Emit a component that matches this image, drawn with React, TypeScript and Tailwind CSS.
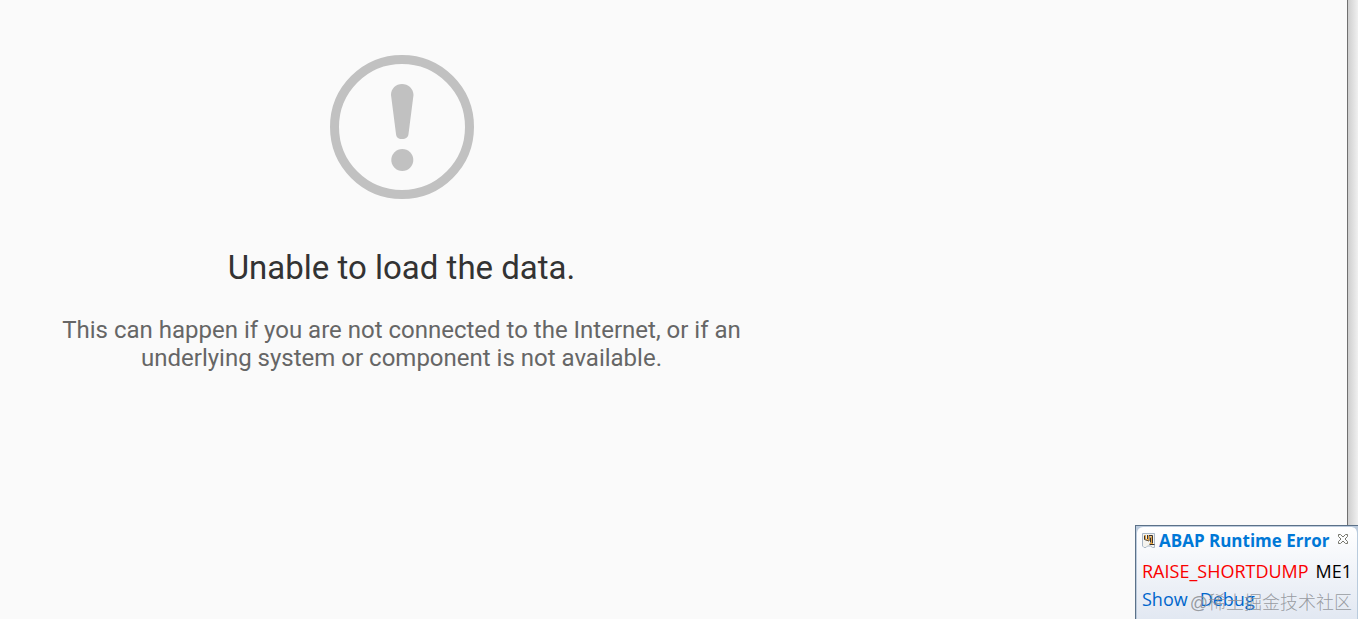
function WarningIcon() {
  return (
    <svg viewBox="0 0 144 144" className="size-36" fill="#c1c1c1" aria-hidden="true">
      <circle cx="72" cy="72" r="67.5" fill="none" stroke="#c1c1c1" strokeWidth="9" />
      <path d="M61 40C61 33.500 66 29 72 29s11.500 4.500 11.500 11L78.500 79c-.4 3.500-2.500 5-6.500 5s-5.600-1.500-6-5z" />
      <circle cx="72.300" cy="105" r="11" />
    </svg>
  );
}

function DumpIcon() {
  return (
    <svg viewBox="0 0 14 16" className="h-4 w-3.5 shrink-0" aria-hidden="true">
      <path d="M.5.5h12v14h-2l-2-1.500h-3L4 14.500H2L.5 13z" fill="#f4f3ee" stroke="#a9b7c6" />
      <path d="M2.500 2.500v4l4.500 1.500v-5.500h3.500v8.500M7.500 11.500h5" fill="none" stroke="#3a3431" strokeWidth="1" />
      <path d="M3.500 2v4l2.500 1M6.500 2.500v5M8.500 3.500h1v7M7.500 10.500h3.500" fill="none" stroke="#e5a23c" strokeWidth="1" />
      <path d="M5.500 2v4M8.500 4.500v5" fill="none" stroke="#3a3431" strokeWidth="1" />
    </svg>
  );
}

function CloseIcon() {
  return (
    <svg viewBox="0 0 12 12" className="size-3" fill="none" stroke="#77776d" aria-hidden="true">
      <path d="M1.500 1.500h2l2.500 2.500 2.500-2.500h2v2L8 6l2.500 2.500v2h-2L6 8l-2.500 2.500h-2v-2L4 6 1.500 3.500z" />
    </svg>
  );
}

function ErrorPopup() {
  return (
    <aside
      aria-label="ABAP Runtime Error"
      className="fixed right-0 bottom-0 w-[223px] border-t border-l border-[#5b7188] bg-[#bccbdd] pt-px pl-px font-['Open_Sans','Noto_Sans',sans-serif] text-lg"
    >
      <div className="rounded-tl-md rounded-tr-md border-r border-[#b9cbdd] bg-linear-to-b from-white to-[#e2e8f2] pb-2 pl-[5px]">
        <header className="flex h-7 items-center">
          <DumpIcon />
          <h2 className="ml-[3px] text-[17px] font-bold whitespace-nowrap text-[#0078d7]">ABAP Runtime Error</h2>
          <button type="button" aria-label="Close" className="mr-2 mb-1 ml-auto shrink-0">
            <CloseIcon />
          </button>
        </header>
        <div className="flex h-8 items-center justify-between pr-[5px] whitespace-nowrap">
          <span className="text-[#fa0000]">RAISE_SHORTDUMP</span>
          <span className="text-black">ME1</span>
        </div>
        <nav className="flex h-6 items-center gap-3 text-[#0066cc]">
          <a href="#show">Show</a>
          <a href="#debug">Debug</a>
        </nav>
      </div>
      <span className="pointer-events-none absolute right-1.5 bottom-1 font-['Liberation_Sans','Noto_Sans_CJK_SC',sans-serif] text-lg leading-6 font-light whitespace-nowrap text-[#8f9297]/90">
        @稀土掘金技术社区
      </span>
    </aside>
  );
}

export default function App() {
  return (
    <div className="flex min-h-screen bg-[#fafafa] font-[Roboto,'Noto_Sans',sans-serif]">
      <main className="grow">
        <section className="flex max-w-[803px] flex-col items-center px-12 pt-[55px] text-center">
          <WarningIcon />
          <h1 className="mt-[49px] text-[33px] leading-10 text-[#333333]">Unable to load the data.</h1>
          <p className="mt-7 text-2xl leading-7 text-[#666666]">
            This can happen if you are not connected to the Internet, or if an underlying system or component is not
            available.
          </p>
        </section>
      </main>
      <div className="w-[11px] border-l border-[#707070] bg-linear-to-r from-[#cfcfcf] to-[#f0f0f0]" />
      <ErrorPopup />
    </div>
  );
}
